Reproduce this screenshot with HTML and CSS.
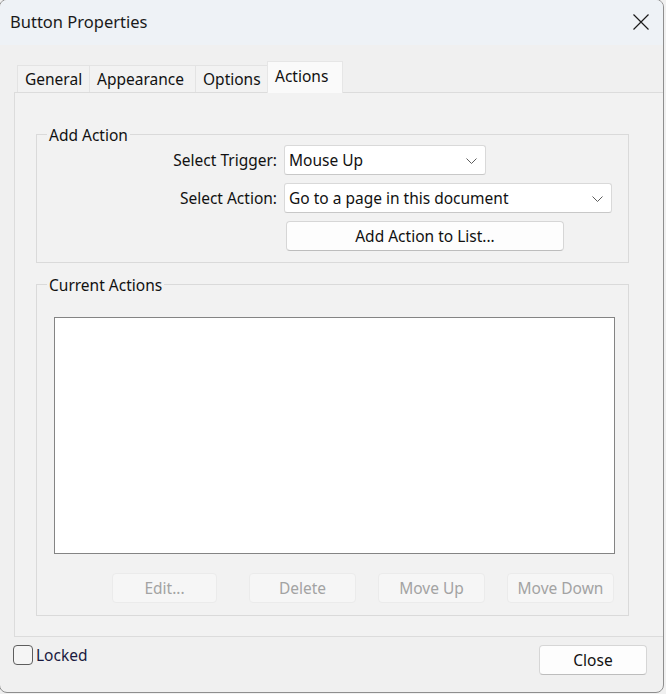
FILE: index.html
```html
<!DOCTYPE html>
<html>
<head>
<meta charset="utf-8">
<title>Button Properties</title>
<link rel="stylesheet" href="styles.css">
</head>
<body>
<div class="window">
  <div class="titlebar">
    <span class="title">Button Properties</span>
    <svg class="close-x" width="16" height="16" viewBox="0 0 16 16"><path d="M0.5 0.5 L15.5 15.5 M15.5 0.5 L0.5 15.5" stroke="#1a1a1a" stroke-width="1.2" fill="none"/></svg>
  </div>
  <div class="content">
    <div class="tabs">
      <div class="tab t-general">General</div>
      <div class="tab t-appearance">Appearance</div>
      <div class="tab t-options">Options</div>
      <div class="tab active t-actions">Actions</div>
    </div>
    <div class="panel">
      <fieldset class="group add-group">
        <legend>Add Action</legend>
        <div class="form">
          <label class="lbl">Select Trigger:</label>
          <div class="select sel-trigger"><span>Mouse Up</span><svg class="chev" width="11" height="6" viewBox="0 0 11 6"><path d="M0.5 0.5 L5.5 5.5 L10.5 0.5" stroke="#5c5c5c" stroke-width="1" fill="none"/></svg></div>
          <label class="lbl">Select Action:</label>
          <div class="select sel-action"><span>Go to a page in this document</span><svg class="chev" width="11" height="6" viewBox="0 0 11 6"><path d="M0.5 0.5 L5.5 5.5 L10.5 0.5" stroke="#5c5c5c" stroke-width="1" fill="none"/></svg></div>
          <span></span>
          <button class="btn btn-add">Add Action to List...</button>
        </div>
      </fieldset>
      <fieldset class="group current-group">
        <legend>Current Actions</legend>
        <div class="listbox"></div>
        <div class="btnrow">
          <button class="btn disabled b-edit">Edit...</button>
          <button class="btn disabled b-delete">Delete</button>
          <button class="btn disabled b-up">Move Up</button>
          <button class="btn disabled b-down">Move Down</button>
        </div>
      </fieldset>
    </div>
    <div class="footer">
      <label class="check"><span class="box"></span><span class="check-label">Locked</span></label>
      <button class="btn btn-close">Close</button>
    </div>
  </div>
</div>
</body>
</html>
```

FILE: styles.css
```css
html, body {
  margin: 0;
  padding: 0;
  background: #f0f0f0;
  overflow: hidden;
}

body {
  font-family: "Noto Sans", "Open Sans", sans-serif;
  font-size: 15.5px;
  color: #111;
}

.window {
  margin: -1px 0 0 -1px;
  width: 663px;
  height: 692px;
  border: 1px solid #8e8e8e;
  border-radius: 8px;
  background: #f0f0f0;
  overflow: hidden;
}

.titlebar {
  height: 45px;
  background: #eef2f6;
  display: flex;
  align-items: center;
  justify-content: space-between;
  padding: 0 14px 0 10px;
}

.title {
  font-size: 16.5px;
  color: #1a1a1a;
  margin-top: -3px;
}

.close-x {
  margin-top: -2px;
}

.content {
  padding-top: 17px;
}

.tabs {
  display: flex;
  align-items: flex-end;
  margin-left: 17px;
  height: 30px;
}

.tab {
  height: 26px;
  line-height: 27px;
  padding: 0 7px;
  border: 1px solid #e3e3e3;
  border-bottom: none;
  background: #f2f2f2;
  margin-right: -1px;
  color: #111;
  box-sizing: content-box;
}

.t-general { width: 57px; }
.t-appearance { width: 91px; }
.t-options { width: 57px; }

.tab.active {
  height: 31px;
  line-height: 28px;
  width: 60px;
  background: #fafafa;
  margin-bottom: -1px;
  position: relative;
  z-index: 1;
  border-color: #e6e6e6;
}

.panel {
  margin-left: 14px;
  width: 630px;
  height: 513px;
  border: 1px solid #dcdcdc;
  background: #f2f2f2;
  padding: 30px 0 0 21px;
  box-sizing: content-box;
}

.group {
  margin: 0;
  padding: 0;
  width: 591px;
  border: 1px solid #dadada;
  min-inline-size: 0;
}

.group legend {
  margin-left: 10px;
  padding: 3px 2px 0;
  line-height: 19px;
  height: 19px;
  color: #111;
}

.add-group {
  padding-bottom: 11px;
}

.form {
  display: grid;
  grid-template-columns: 240px auto;
  column-gap: 7px;
  row-gap: 8px;
  padding-top: 0;
  justify-items: start;
  align-items: center;
}

.lbl {
  justify-self: end;
  color: #111;
}

.select {
  box-sizing: border-box;
  height: 30px;
  background: #fff;
  border: 1px solid #d9d9d9;
  border-bottom-color: #c8c8c8;
  border-radius: 3px;
  display: flex;
  align-items: center;
  justify-content: space-between;
  padding: 0 8px 0 4px;
}

.sel-trigger { width: 202px; }
.sel-action { width: 328px; }

.chev {
  margin-top: 1px;
}

.btn {
  box-sizing: border-box;
  font-family: inherit;
  font-size: 15.5px;
  height: 30px;
  background: #fdfdfd;
  border: 1px solid #d6d6d6;
  border-bottom-color: #bdbdbd;
  border-radius: 4px;
  color: #111;
  padding: 0;
  margin: 0;
}

.btn-add {
  width: 278px;
  margin-left: 2px;
}

.current-group {
  margin-top: 10px;
  padding-bottom: 12px;
}

.listbox {
  box-sizing: border-box;
  margin: 22px 0 0 17px;
  width: 561px;
  height: 237px;
  background: #fff;
  border: 1px solid #848484;
}

.btnrow {
  display: flex;
  justify-content: flex-end;
  padding-right: 14px;
  margin-top: 19px;
}

.btn.disabled {
  background: #f6f6f6;
  border: 1px solid #ebebeb;
  color: #a3a3a3;
  height: 30px;
  width: 107px;
}

.b-edit { width: 105px !important; }
.b-delete { margin-left: 32px; }
.b-up { margin-left: 22px; }
.b-down { margin-left: 22px; }

.footer {
  display: flex;
  justify-content: space-between;
  align-items: flex-start;
  padding: 8px 16px 0 13px;
}

.check {
  display: flex;
  align-items: center;
  height: 20px;
}

.box {
  box-sizing: border-box;
  width: 20px;
  height: 20px;
  border: 1.5px solid #5e5e5e;
  border-radius: 4px;
  background: #f5f5f5;
}

.check-label {
  margin-left: 3px;
  color: #1a1a40;
}

.btn-close {
  width: 108px;
  height: 30px;
}
```
